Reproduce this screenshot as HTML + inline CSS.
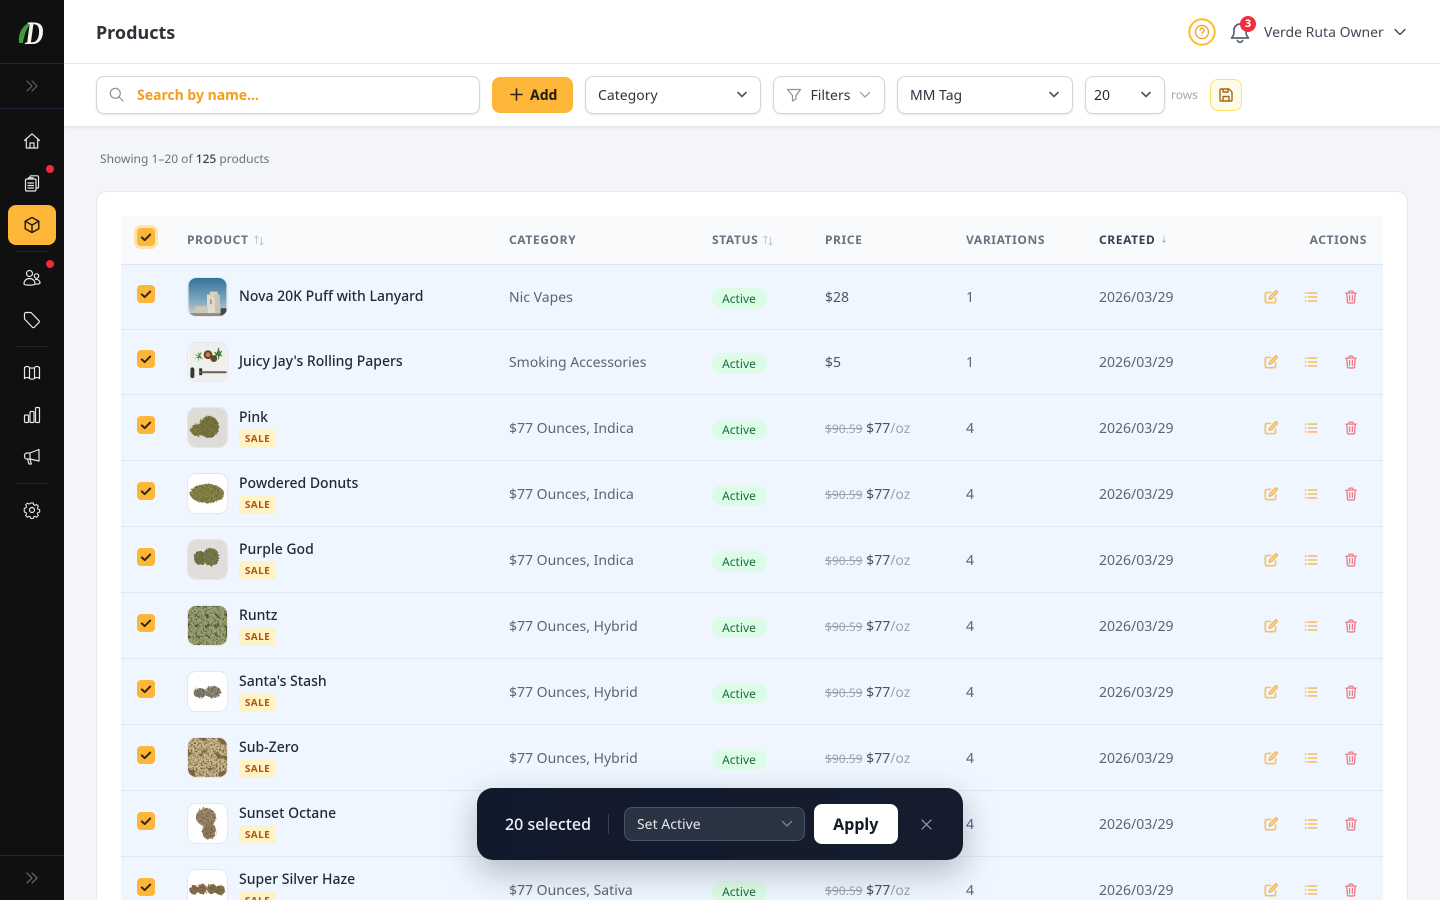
<!DOCTYPE html>
<html><head><meta charset="utf-8"><title>Products</title>
<style>
*{box-sizing:border-box}
html,body{margin:0;padding:0;width:1440px;height:900px;overflow:hidden;background:#f3f5f8}
body{font-family:"Noto Sans","Noto Sans CJK JP","Liberation Sans",sans-serif;font-size:14px;color:#1f2937;position:relative}
.a,.row>*{position:absolute}
.t{position:absolute;line-height:20px;white-space:nowrap}
#side{position:absolute;left:0;top:0;width:64px;height:900px;background:#101010;z-index:5}
#side svg{position:absolute;fill:none;stroke:#e5e7eb;stroke-width:1.2;stroke-linecap:round;stroke-linejoin:round}
.hl{position:absolute;height:1px;background:#1e2a3a;left:0;width:64px}
.sl{position:absolute;height:1px;background:#262626;left:16px;width:32px}
.dot{position:absolute;width:8px;height:8px;border-radius:50%;background:#ef2b35;left:46px}
#top{position:absolute;left:64px;right:0;top:0;height:64px;background:#fff;border-bottom:1px solid #e3e6ea}
#bar{position:absolute;left:64px;right:0;top:64px;height:63px;background:#fff;border-bottom:1px solid #e4e7eb;box-shadow:0 1px 2px rgba(0,0,0,.06)}
.fld{position:absolute;background:#fff;border:1px solid #d1d5db;border-radius:8px;box-shadow:0 1px 2px rgba(0,0,0,.09);top:76px;height:38px}
.chev{position:absolute;fill:none;stroke:#4b5563;stroke-width:1.6;stroke-linecap:round;stroke-linejoin:round}
#card{position:absolute;left:96px;top:191px;width:1312px;height:709px;background:#fff;border-radius:10px 10px 0 0;border:1px solid #e6e9ed;border-bottom:0}
#thead{position:absolute;left:121px;top:216px;width:1262px;height:49px;background:#f9fafc;border-bottom:1px solid #dfe5ee}
.h{position:absolute;top:230px;line-height:20px;font-size:12px;font-weight:700;letter-spacing:.6px;color:#6b7280;white-space:nowrap}
.row{position:absolute;left:121px;width:1262px;height:66px;background:#eff6ff;border-bottom:1px solid #dfe7f1}
.ck{left:16px;top:21px;width:18px;height:18px;border-radius:4px;background:#fdb638;display:block}
.ck svg{position:absolute;left:3px;top:3px;width:12px;height:12px;fill:none;stroke:#33281a;stroke-width:2;stroke-linecap:round;stroke-linejoin:round}
.th{left:67px;top:13px;width:39px;height:39px;border-radius:8px;background:#fff;box-shadow:0 0 0 1px #e5e7eb}
.n{left:118px;top:13px;line-height:20px;font-weight:500;color:#1f2937;white-space:nowrap}
.s{left:118px;top:34px;width:37px;height:19px;background:#fef3c7;border-radius:3px;color:#b45309;font-size:10px;font-weight:700;letter-spacing:.4px;line-height:19px;text-align:center}
.c{left:388px;top:24px;line-height:20px;color:#5b6472;white-space:nowrap}
.b{left:591px;top:24px;width:55px;height:21px;border-radius:11px;background:#dcfce7;color:#166f3d;font-size:12px;line-height:21px;text-align:center;padding-right:1px}
.p{left:704px;top:24px;line-height:20px;color:#4b5563;white-space:nowrap}
.p s{font-size:12px;color:#9ca3af}
.p em{font-style:normal;color:#9ca3af}
.v{left:845px;top:24px;line-height:20px;color:#5b6472}
.d{left:978px;top:24px;line-height:20px;color:#5b6472}
.ic{width:14px;height:14px;top:26px;fill:none;stroke-linecap:round;stroke-linejoin:round;stroke-width:1.5}
.i1{left:1143px;stroke:#f5b545}.i2{left:1183px;stroke:#f5b545}.i3{left:1223px;stroke:#f07a86}
.one .ck{top:20px}.one .n{top:22px}.one .th{top:13px;height:38px}.one .c,.one .p,.one .v,.one .d{top:23px}.one .b{top:23px}.one .ic{top:25px}
#bulk{position:absolute;left:477px;top:788px;width:485.5px;height:72px;border-radius:16px;background:linear-gradient(90deg,#111a2c,#141c2e);box-shadow:0 12px 34px rgba(15,23,42,.28);z-index:4}
</style></head>
<body>
<svg width="0" height="0" style="position:absolute">
<defs>
<filter id="bud" x="-20%" y="-20%" width="140%" height="140%">
<feTurbulence type="fractalNoise" baseFrequency=".6" numOctaves="2" seed="4" result="n"/>
<feDisplacementMap in="SourceGraphic" in2="n" scale="3.5" result="d"/>
<feColorMatrix in="n" type="matrix" values="0 0 0 0 .12 0 0 0 0 .12 0 0 0 0 .05 3.6 0 0 0 -1.5" result="m"/>
<feComposite in="m" in2="d" operator="in" result="c"/>
<feMerge><feMergeNode in="d"/><feMergeNode in="c"/></feMerge>
</filter>
<filter id="sf"><feGaussianBlur stdDeviation=".3"/></filter>
<linearGradient id="sky" x1="0" y1="0" x2="0" y2="1"><stop offset="0" stop-color="#33729c"/><stop offset=".6" stop-color="#7ea9bf"/><stop offset="1" stop-color="#cfd4cf"/></linearGradient>
</defs>
<symbol id="t1" viewBox="0 0 39 39"><rect width="39" height="39" rx="8" fill="url(#sky)"/><g filter="url(#sf)"><rect x="19" y="17" width="13" height="20" fill="#e2dccd"/><rect x="22" y="14" width="8" height="6" fill="#d8d2c2"/><rect x="27" y="17" width="5" height="20" fill="#cbc4b2"/><rect x="7" y="29" width="13" height="8" fill="#cfc8ba"/><rect x="0" y="36" width="39" height="3" fill="#8b8f88"/><rect x="33" y="31" width="6" height="8" fill="#3c4a44"/><rect x="22" y="22" width="2" height="5" fill="#a7a08f"/></g></symbol>
<symbol id="t2" viewBox="0 0 39 39"><rect width="39" height="39" rx="8" fill="#eff0ee"/><path d="M9 9l2 4-5-2 4 3-5 2 5-1 0 5 1-5 4 2-3-4 2-4-3 2z" fill="#4f8a3a"/><path d="M31 4l-2 6-3-1 2 3-2 2 4-1 1 5 1-5 3 1-2-3 2-3-3 1z" fill="#3f7d3a"/><circle cx="20" cy="12" r="4.500" fill="#6b3f22"/><circle cx="20" cy="12" r="2.500" fill="#b8864a"/><circle cx="26" cy="16" r="3.500" fill="#5b4a26"/><rect x="2" y="25" width="4" height="11" rx="2" fill="#33363a"/><rect x="11" y="26" width="3" height="7" fill="#2b2b2b"/><rect x="11" y="29" width="28" height="2" fill="#6b5a50"/></symbol>
<symbol id="t3" viewBox="0 0 39 39"><rect width="39" height="39" rx="8" fill="#dddcd6"/><g filter="url(#bud)"><ellipse cx="10" cy="22" rx="7.500" ry="6" fill="#85803f"/><ellipse cx="21" cy="19" rx="10" ry="11" fill="#7d783c"/></g></symbol>
<symbol id="t4" viewBox="0 0 39 39"><rect width="39" height="39" rx="8" fill="#fff"/><g filter="url(#bud)"><ellipse cx="19" cy="19.500" rx="17" ry="9.500" fill="#8f8747"/></g></symbol>
<symbol id="t5" viewBox="0 0 39 39"><rect width="39" height="39" rx="8" fill="#dfdeda"/><g filter="url(#bud)"><ellipse cx="12" cy="18" rx="6" ry="7" fill="#727642"/><ellipse cx="23" cy="17" rx="8" ry="9" fill="#7a7e48"/></g></symbol>
<symbol id="t6" viewBox="0 0 39 39"><rect width="39" height="39" rx="8" fill="#4d5632"/><g filter="url(#bud)" fill="#a0a97a"><circle cx="4" cy="4" r="5.500"/><circle cx="13" cy="5" r="5.500"/><circle cx="23" cy="4" r="5.500"/><circle cx="33" cy="5" r="5.500"/><circle cx="5" cy="14" r="5.500"/><circle cx="15" cy="15" r="5.500"/><circle cx="25" cy="14" r="5.500"/><circle cx="35" cy="15" r="5.500"/><circle cx="4" cy="25" r="5.500"/><circle cx="13" cy="25" r="5.500"/><circle cx="23" cy="25" r="5.500"/><circle cx="33" cy="25" r="5.500"/><circle cx="6" cy="35" r="5.500"/><circle cx="16" cy="35" r="5.500"/><circle cx="26" cy="35" r="5.500"/><circle cx="35" cy="35" r="5.500"/></g></symbol>
<symbol id="t7" viewBox="0 0 39 39"><rect width="39" height="39" rx="8" fill="#fff"/><g filter="url(#bud)"><ellipse cx="12" cy="21" rx="6.500" ry="5" fill="#837c74"/><ellipse cx="25" cy="20" rx="8" ry="6" fill="#8f897c"/></g></symbol>
<symbol id="t8" viewBox="0 0 39 39"><rect width="39" height="39" rx="8" fill="#7a6444"/><g filter="url(#bud)" fill="#d4bb8e"><circle cx="8" cy="8" r="8.500"/><circle cx="24" cy="7" r="8.500"/><circle cx="36" cy="12" r="6"/><circle cx="6" cy="24" r="8.500"/><circle cx="21" cy="22" r="8.500"/><circle cx="33" cy="27" r="7"/><circle cx="14" cy="35" r="7"/><circle cx="26" cy="36" r="5"/></g></symbol>
<symbol id="t9" viewBox="0 0 39 39"><rect width="39" height="39" rx="8" fill="#fff"/><g filter="url(#bud)"><ellipse cx="18" cy="13" rx="10" ry="9" fill="#a68c70"/><ellipse cx="21" cy="27" rx="7" ry="8.500" fill="#967e60"/></g></symbol>
<symbol id="t10" viewBox="0 0 39 39"><rect width="39" height="39" rx="8" fill="#fff"/><g filter="url(#bud)" fill="#8f6f4c"><circle cx="6" cy="20" r="4.500"/><circle cx="14" cy="19" r="5"/><circle cx="24" cy="19" r="5"/><circle cx="32" cy="20" r="5"/></g></symbol>
<symbol id="edit" viewBox="0 0 16 16"><path d="M7.500 2.800H3.200A1.700 1.700 0 0 0 1.500 4.500v8.300a1.700 1.700 0 0 0 1.700 1.700h8.300a1.700 1.700 0 0 0 1.700-1.700V9" stroke-width="1.900" opacity=".8"/><path d="M5.800 10.600l.6-2.700 6.400-6.400a1.300 1.300 0 0 1 2 2L8.400 10z" fill="#f5b545" fill-opacity=".35"/></symbol>
<symbol id="list" viewBox="0 0 16 16"><path d="M5 3.500h9.500M5 8h9.500M5 12.500h9.500M1.500 3.500h.7M1.500 8h.7M1.500 12.500h.7"/></symbol>
<symbol id="trash" viewBox="0 0 16 16"><path d="M2 3.600h12M5.700 3.600V2.200a.9.9 0 0 1 .9-.9h2.800a.9.9 0 0 1 .9.9v1.400M3.200 3.600l.7 10a1.400 1.400 0 0 0 1.400 1.200h5.400a1.400 1.400 0 0 0 1.400-1.200l.7-10M6.400 6.500v5.500M9.600 6.500v5.500"/></symbol>
<symbol id="chk" viewBox="0 0 12 12"><path d="M1.800 6.400l2.900 2.700 5.500-5.600"/></symbol>
<symbol id="sort" viewBox="0 0 12 12"><path d="M3.500 10V2M1.500 4l2-2 2 2" stroke="#c4c9d1"/><path d="M8.500 3v8M6.500 9l2 2 2-2" stroke="#c4c9d1"/></symbol>
</svg>

<div id="side">
<svg style="left:16px;top:16px;stroke:none" width="32" height="32" viewBox="0 0 32 32"><path d="M3 27C2 16 7 8 17 5.500c-5 4-8.500 11-10 21.500z" fill="#3f9b3a"/><text transform="translate(9 28) scale(.78 1)" font-family="Liberation Serif,serif" font-style="italic" font-weight="700" font-size="33" fill="#f3f3f0" stroke="none">D</text></svg>
<div class="hl" style="top:63px"></div>
<svg style="left:25px;top:79px;stroke:#5f6368" width="14" height="14" viewBox="0 0 14 14"><path d="M2 2l5 5-5 5M7 2l5 5-5 5"/></svg>
<div class="hl" style="top:108px"></div>
<svg style="left:23px;top:132px" width="18" height="18" viewBox="0 0 18 18"><path d="M1.500 8.500L9 1.800l7.500 6.700M3.300 7.500v8.500h11.400V7.500M7 16v-5h4v5"/></svg>
<div class="dot" style="top:165px"></div>
<svg style="left:23px;top:174px" width="18" height="18" viewBox="0 0 18 18"><path d="M7 4V2.800a1 1 0 0 1 1-1h6.500a1 1 0 0 1 1 1V13a1 1 0 0 1-1 1H13"/><rect x="2.500" y="5" width="10.500" height="12" rx="1.200"/><path d="M5.500 5V3.800h4.500V5M5 9h5.500M5 11.500h5.500M5 14h5.500"/></svg>
<div style="position:absolute;left:8px;top:205px;width:48px;height:40px;border-radius:8px;background:#fdb638"></div>
<svg style="left:23px;top:216px;stroke:#1c1a14;stroke-width:1.400" width="18" height="18" viewBox="0 0 18 18"><path d="M9 1.500l6.800 3.700v7.600L9 16.500l-6.800-3.700V5.200zM2.200 5.200L9 9l6.800-3.800M9 9v7.500"/></svg>
<div class="sl" style="top:251px"></div>
<div class="dot" style="top:260px"></div>
<svg style="left:23px;top:269px" width="18" height="18" viewBox="0 0 18 18"><circle cx="6.500" cy="4.500" r="3"/><circle cx="13.500" cy="7" r="2.200"/><path d="M1 15c0-3.500 2.500-5.500 5.500-5.500S12 11.500 12 15c0 1.500-11 1.500-11 0zM12.500 10.500c2.800-.4 4.500 1.300 4.500 3.500 0 1-2.500 1.200-4.500 1"/></svg>
<svg style="left:23px;top:311px" width="18" height="18" viewBox="0 0 18 18"><path d="M1.500 3a1.500 1.500 0 0 1 1.500-1.500h5l8 8.300a1.200 1.200 0 0 1 0 1.700l-4.800 4.800a1.200 1.200 0 0 1-1.700 0L1.500 8z"/></svg>
<div class="sl" style="top:346px"></div>
<svg style="left:23px;top:364px" width="18" height="18" viewBox="0 0 18 18"><path d="M1.500 3.500c1.700-1.400 3.700-1.400 5 0 .8.800 4.200.8 5 0 1.300-1.400 3.300-1.400 5 0v11c-1.700-1.400-3.700-1.400-5 0-.8.800-4.200.8-5 0-1.300-1.400-3.300-1.400-5 0zM6.500 3.500v11M11.500 3.500v11"/></svg>
<svg style="left:23px;top:406px" width="18" height="18" viewBox="0 0 18 18"><rect x="1.500" y="9" width="4" height="7.500" rx="1"/><rect x="7" y="5.500" width="4" height="11" rx="1"/><rect x="12.500" y="1.500" width="4" height="15" rx="1"/></svg>
<svg style="left:23px;top:448px" width="18" height="18" viewBox="0 0 18 18"><path d="M16 1.500v11.500L7 11H4a2.500 2.500 0 0 1-2.500-2.500v-1A2.500 2.500 0 0 1 4 5h3zM7 5v6M4.500 11l1.500 5h2.300l-1.300-5"/></svg>
<div class="sl" style="top:483px"></div>
<svg style="left:23px;top:501px" width="18" height="18" viewBox="0 0 18 18"><circle cx="9" cy="9" r="2.500"/><path d="M7.600 1.500h2.800l.4 2.100 1.500.7 1.900-1.100 2 2-1.100 1.900.6 1.500 2 .5v2.800l-2 .5-.6 1.500 1.100 1.900-2 2-1.900-1.100-1.500.6-.4 2.100H7.600l-.5-2.100-1.500-.6-1.900 1.100-2-2 1.100-1.900-.6-1.500-2-.5V7.600l2-.5.6-1.500-1.100-1.900 2-2 1.900 1.100 1.500-.7z" transform="translate(1.100 .6) scale(.88)"/></svg>
<div class="hl" style="top:855px"></div>
<svg style="left:25px;top:871px;stroke:#6b6f73" width="14" height="14" viewBox="0 0 14 14"><path d="M2 2l5 5-5 5M7 2l5 5-5 5"/></svg>
</div>

<div id="top"></div>
<div class="t" style="left:96px;top:20px;font-size:18px;line-height:26px;font-weight:700;color:#2d3239">Products</div>
<svg class="a" style="left:1188px;top:18px" width="28" height="28" viewBox="0 0 28 28" fill="none"><circle cx="14" cy="14" r="12.700" stroke="#fbbf24" stroke-width="2"/><circle cx="14" cy="14" r="6.500" stroke="#f0a52a" stroke-width="1.400"/><path d="M12 12.300a2 2 0 1 1 2.900 1.800c-.6.300-.9.700-.9 1.300M14 17.300v.1" stroke="#f0a52a" stroke-width="1.300" stroke-linecap="round"/></svg>
<svg class="a" style="left:1230px;top:21px" width="20" height="22" viewBox="0 0 20 22" fill="none" stroke="#5b6472" stroke-width="1.700" stroke-linecap="round" stroke-linejoin="round"><path d="M1.500 17h17c-1.500-1.500-2.500-3-2.500-6V9A6 6 0 0 0 4 9v2c0 3-1 4.500-2.500 6zM7.500 19.500a2.600 2.600 0 0 0 5 0"/></svg>
<div class="a" style="left:1240px;top:16px;width:16px;height:16px;border-radius:50%;background:#f02d3e;color:#fff;font-size:11px;font-weight:700;line-height:16px;text-align:center">3</div>
<div class="t" style="left:1264px;top:23px;color:#414957">Verde Ruta Owner</div>
<svg class="chev" style="left:1394px;top:27px;stroke:#414957;stroke-width:1.400" width="12" height="10" viewBox="0 0 12 10"><path d="M1 2.500l5 5 5-5"/></svg>

<div id="bar"></div>
<div class="fld" style="left:96px;width:384px"></div>
<svg class="a" style="left:109px;top:87px" width="15" height="15" viewBox="0 0 15 15" fill="none" stroke="#8b929c" stroke-width="1.200" stroke-linecap="round"><circle cx="6.300" cy="6.300" r="5"/><path d="M10 10l4 4"/></svg>
<div class="t" style="left:137px;top:86px;font-weight:700;color:#f59e1b;font-size:14px">Search by name...</div>
<div class="a" style="left:492px;top:77px;width:81px;height:36px;border-radius:8px;background:#fdb638"></div>
<svg class="a" style="left:509px;top:87px" width="15" height="15" viewBox="0 0 15 15" stroke="#2a2416" stroke-width="1.600" stroke-linecap="round"><path d="M7.500 2v11M2 7.500h11"/></svg>
<div class="t" style="left:530px;top:86px;font-weight:700;color:#1f1c14">Add</div>
<div class="fld" style="left:585px;width:176px"></div>
<div class="t" style="left:598px;top:86px;color:#2d3440">Category</div>
<svg class="chev" style="left:736px;top:90px" width="12" height="10" viewBox="0 0 12 10"><path d="M2 2.500l4 4 4-4"/></svg>
<div class="fld" style="left:773px;width:112px"></div>
<svg class="a" style="left:786px;top:87px" width="16" height="16" viewBox="0 0 16 16" fill="none" stroke="#8b929c" stroke-width="1.200" stroke-linejoin="round"><path d="M1.500 2.500h13L10 8.500V12l-3.500 2V8.500z"/></svg>
<div class="t" style="left:810.5px;top:86px;color:#2d3440">Filters</div>
<svg class="chev" style="left:859px;top:90px;stroke:#9ca3af;stroke-width:1.300" width="12" height="10" viewBox="0 0 12 10"><path d="M1.500 2.500l4.500 4.500 4.500-4.500"/></svg>
<div class="fld" style="left:897px;width:176px"></div>
<div class="t" style="left:910px;top:86px;color:#2d3440">MM Tag</div>
<svg class="chev" style="left:1048px;top:90px" width="12" height="10" viewBox="0 0 12 10"><path d="M2 2.500l4 4 4-4"/></svg>
<div class="fld" style="left:1085px;width:80px"></div>
<div class="t" style="left:1094px;top:86px;color:#1f2937">20</div>
<svg class="chev" style="left:1140px;top:90px" width="12" height="10" viewBox="0 0 12 10"><path d="M2 2.500l4 4 4-4"/></svg>
<div class="t" style="left:1171px;top:85px;font-size:12px;color:#a2a8b2">rows</div>
<div class="a" style="left:1210px;top:79px;width:32px;height:32px;border-radius:8px;background:#fefce8;border:1px solid #fde26b"></div>
<svg class="a" style="left:1219px;top:88px" width="14" height="14" viewBox="0 0 14 14" fill="none" stroke="#a1661c" stroke-width="1.400" stroke-linejoin="round"><path d="M1 2a1 1 0 0 1 1-1h8l3 3v8a1 1 0 0 1-1 1H2a1 1 0 0 1-1-1z"/><path d="M4 13V8.500h6V13M4 1v3h5V1"/></svg>

<div class="t" style="left:100px;top:149px;font-size:12px;color:#6b7280">Showing 1–20 of <span style="color:#374151;font-weight:500">125</span> products</div>

<div id="card"></div>
<div id="thead"></div>
<div class="a" style="left:134px;top:225px;width:24px;height:24px;border-radius:7px;background:#fde3ae"></div>
<div class="a" style="left:137px;top:228px;width:18px;height:18px;border-radius:4px;background:#fdb638"></div>
<svg class="a" style="left:140px;top:231px;fill:none;stroke:#33281a;stroke-width:2;stroke-linecap:round;stroke-linejoin:round" width="12" height="12"><use href="#chk"/></svg>
<div class="h" style="left:187px">PRODUCT</div>
<svg class="a" style="left:253px;top:234px;fill:none" width="12" height="12"><use href="#sort"/></svg>
<div class="h" style="left:509px">CATEGORY</div>
<div class="h" style="left:712px">STATUS</div>
<svg class="a" style="left:762px;top:234px;fill:none" width="12" height="12"><use href="#sort"/></svg>
<div class="h" style="left:825px">PRICE</div>
<div class="h" style="left:966px">VARIATIONS</div>
<div class="h" style="left:1099px;color:#374151">CREATED</div>
<div class="t" style="left:1160px;top:230px;font-size:8px;color:#8b929c">↓</div>
<div class="h" style="right:73px">ACTIONS</div>

<div class="row one" style="top:265px;height:65px"><i class="ck"><svg><use href="#chk"/></svg></i><svg class="th"><use href="#t1"/></svg><div class="n">Nova 20K Puff with Lanyard</div><div class="c">Nic Vapes</div><div class="b">Active</div><div class="p">$28</div><div class="v">1</div><div class="d">2026/03/29</div><svg class="ic i1"><use href="#edit"/></svg><svg class="ic i2"><use href="#list"/></svg><svg class="ic i3"><use href="#trash"/></svg></div>

<div class="row one" style="top:330px;height:65px"><i class="ck"><svg><use href="#chk"/></svg></i><svg class="th"><use href="#t2"/></svg><div class="n">Juicy Jay's Rolling Papers</div><div class="c">Smoking Accessories</div><div class="b">Active</div><div class="p">$5</div><div class="v">1</div><div class="d">2026/03/29</div><svg class="ic i1"><use href="#edit"/></svg><svg class="ic i2"><use href="#list"/></svg><svg class="ic i3"><use href="#trash"/></svg></div>

<div class="row" style="top:395px"><i class="ck"><svg><use href="#chk"/></svg></i><svg class="th"><use href="#t3"/></svg><div class="n">Pink</div><div class="s">SALE</div><div class="c">$77 Ounces, Indica</div><div class="b">Active</div><div class="p"><s>$90.59</s> $77<em>/oz</em></div><div class="v">4</div><div class="d">2026/03/29</div><svg class="ic i1"><use href="#edit"/></svg><svg class="ic i2"><use href="#list"/></svg><svg class="ic i3"><use href="#trash"/></svg></div>

<div class="row" style="top:461px"><i class="ck"><svg><use href="#chk"/></svg></i><svg class="th"><use href="#t4"/></svg><div class="n">Powdered Donuts</div><div class="s">SALE</div><div class="c">$77 Ounces, Indica</div><div class="b">Active</div><div class="p"><s>$90.59</s> $77<em>/oz</em></div><div class="v">4</div><div class="d">2026/03/29</div><svg class="ic i1"><use href="#edit"/></svg><svg class="ic i2"><use href="#list"/></svg><svg class="ic i3"><use href="#trash"/></svg></div>

<div class="row" style="top:527px"><i class="ck"><svg><use href="#chk"/></svg></i><svg class="th"><use href="#t5"/></svg><div class="n">Purple God</div><div class="s">SALE</div><div class="c">$77 Ounces, Indica</div><div class="b">Active</div><div class="p"><s>$90.59</s> $77<em>/oz</em></div><div class="v">4</div><div class="d">2026/03/29</div><svg class="ic i1"><use href="#edit"/></svg><svg class="ic i2"><use href="#list"/></svg><svg class="ic i3"><use href="#trash"/></svg></div>

<div class="row" style="top:593px"><i class="ck"><svg><use href="#chk"/></svg></i><svg class="th"><use href="#t6"/></svg><div class="n">Runtz</div><div class="s">SALE</div><div class="c">$77 Ounces, Hybrid</div><div class="b">Active</div><div class="p"><s>$90.59</s> $77<em>/oz</em></div><div class="v">4</div><div class="d">2026/03/29</div><svg class="ic i1"><use href="#edit"/></svg><svg class="ic i2"><use href="#list"/></svg><svg class="ic i3"><use href="#trash"/></svg></div>

<div class="row" style="top:659px"><i class="ck"><svg><use href="#chk"/></svg></i><svg class="th"><use href="#t7"/></svg><div class="n">Santa's Stash</div><div class="s">SALE</div><div class="c">$77 Ounces, Hybrid</div><div class="b">Active</div><div class="p"><s>$90.59</s> $77<em>/oz</em></div><div class="v">4</div><div class="d">2026/03/29</div><svg class="ic i1"><use href="#edit"/></svg><svg class="ic i2"><use href="#list"/></svg><svg class="ic i3"><use href="#trash"/></svg></div>

<div class="row" style="top:725px"><i class="ck"><svg><use href="#chk"/></svg></i><svg class="th"><use href="#t8"/></svg><div class="n">Sub-Zero</div><div class="s">SALE</div><div class="c">$77 Ounces, Hybrid</div><div class="b">Active</div><div class="p"><s>$90.59</s> $77<em>/oz</em></div><div class="v">4</div><div class="d">2026/03/29</div><svg class="ic i1"><use href="#edit"/></svg><svg class="ic i2"><use href="#list"/></svg><svg class="ic i3"><use href="#trash"/></svg></div>

<div class="row" style="top:791px"><i class="ck"><svg><use href="#chk"/></svg></i><svg class="th"><use href="#t9"/></svg><div class="n">Sunset Octane</div><div class="s">SALE</div><div class="c">$77 Ounces, Hybrid</div><div class="b">Active</div><div class="p"><s>$90.59</s> $77<em>/oz</em></div><div class="v">4</div><div class="d">2026/03/29</div><svg class="ic i1"><use href="#edit"/></svg><svg class="ic i2"><use href="#list"/></svg><svg class="ic i3"><use href="#trash"/></svg></div>

<div class="row" style="top:857px;height:43px;overflow:hidden;border-bottom:0"><i class="ck"><svg><use href="#chk"/></svg></i><svg class="th"><use href="#t10"/></svg><div class="n">Super Silver Haze</div><div class="s">SALE</div><div class="c">$77 Ounces, Sativa</div><div class="b">Active</div><div class="p"><s>$90.59</s> $77<em>/oz</em></div><div class="v">4</div><div class="d">2026/03/29</div><svg class="ic i1"><use href="#edit"/></svg><svg class="ic i2"><use href="#list"/></svg><svg class="ic i3"><use href="#trash"/></svg></div>

<div id="bulk">
<div class="t" style="left:28px;top:25px;font-size:16px;line-height:22px;font-weight:500;color:#f1f3f6">20 selected</div>
<div class="a" style="left:131px;top:26px;width:1px;height:20px;background:#374151"></div>
<div class="a" style="left:147px;top:19px;width:181px;height:34px;border-radius:8px;background:#2a3342;border:1px solid #4b5563"></div>
<div class="t" style="left:160px;top:27px;color:#e5e7eb">Set Active</div>
<svg class="chev" style="left:304px;top:31px;stroke:#7b8492;stroke-width:1.400" width="12" height="10" viewBox="0 0 12 10"><path d="M1.500 2.500l4.500 4.500 4.500-4.500"/></svg>
<div class="a" style="left:336.5px;top:16px;width:84.5px;height:40px;border-radius:8px;background:#fff;color:#111827;font-size:16px;font-weight:700;line-height:40px;text-align:center">Apply</div>
<svg class="a" style="left:444px;top:31px" width="11" height="11" viewBox="0 0 11 11" stroke="#9ca3af" stroke-width="1.200" stroke-linecap="round"><path d="M1 1l9 9M10 1l-9 9"/></svg>
</div>
</body></html>
